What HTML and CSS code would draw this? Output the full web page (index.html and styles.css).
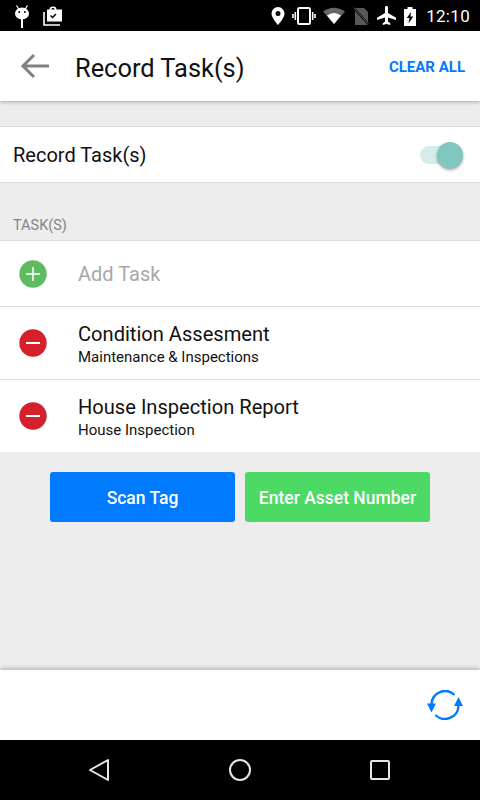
FILE: index.html
```html
<!DOCTYPE html>
<html lang="en">
<head>
<meta charset="utf-8">
<title>Record Task(s)</title>
<link rel="stylesheet" href="styles.css">
</head>
<body>
<div class="phone">
  <header class="status">
    <div class="status-left">
      <svg width="18" height="24" viewBox="0 0 18 24"><path d="M3.500 1.500l2.500 4M14.500 1.500l-2.500 4" stroke="#fff" stroke-width="1.200" fill="none"/><rect x="8" y="14" width="2" height="10" fill="#fff"/><ellipse cx="9" cy="9.500" rx="7" ry="6" fill="#fff"/><circle cx="6.200" cy="8" r="1" fill="#000"/><circle cx="11.800" cy="8" r="1" fill="#000"/></svg>
      <svg width="20" height="20" viewBox="0 0 20 20"><path d="M1 6v13h16" fill="none" stroke="#fff" stroke-width="1.600"/><path fill-rule="evenodd" d="M6.500 3.500a3.500 3 0 0 1 7 0h5.500v12H4v-12zM8.300 3.500h3.400a1.700 1.400 0 0 0-3.400 0z" fill="#fff"/><path d="M7.500 9.500l2 2 3.500-3.500" fill="none" stroke="#000" stroke-width="1.500"/></svg>
    </div>
    <div class="status-right">
      <svg width="14" height="20" viewBox="0 0 14 20"><path fill-rule="evenodd" d="M7 1a6.500 6.500 0 0 0-6.500 6.500C.5 12 7 19 7 19s6.500-7 6.500-11.500A6.500 6.500 0 0 0 7 1zm0 4a2.500 2.500 0 1 1 0 5 2.500 2.500 0 0 1 0-5z" fill="#fff"/></svg>
      <svg width="24" height="18" viewBox="0 0 24 18"><rect x="6" y="1" width="12" height="16" rx="1.500" fill="none" stroke="#fff" stroke-width="2"/><path d="M3.300 5v8M1 7v4M20.700 5v8M23 7v4" stroke="#fff" stroke-width="1.600"/></svg>
      <svg width="22" height="17" viewBox="0 0 22 17"><path d="M0 4.500Q11-3 22 4.500L11 17z" fill="#666"/><path d="M4 8.500Q11 3.500 18 8.500L11 17z" fill="#fff"/></svg>
      <svg width="18" height="20" viewBox="0 0 18 20"><path d="M3 2h9l4 4v13H3z" fill="#585858"/><path d="M0.500 0.500L17.500 19.500" stroke="#000" stroke-width="2"/><path d="M1.500 1.500L16.500 18" stroke="#585858" stroke-width="1"/></svg>
      <svg width="19" height="19" viewBox="0 0 19 19"><path d="M8 1.500c0-1.900 3-1.900 3 0V7l8 4.700v2.200l-8-2.500v4.200l2.300 1.700V19l-3.800-1.100L5.700 19v-1.700L8 15.600v-4.200l-8 2.500v-2.200L8 7z" fill="#fff"/></svg>
      <svg width="14" height="20" viewBox="0 0 14 20"><path fill-rule="evenodd" d="M4.500 1h5v2H13v17H1V3h3.500zM8 6L3.800 12H6.500l-1 5.500L10.300 10.500H7.500z" fill="#fff"/></svg>
      <span class="clock">12:10</span>
    </div>
  </header>

  <div class="appbar">
    <div class="appbar-left">
      <svg class="back" width="30" height="26" viewBox="0 0 30 26"><path d="M29 13H3M14 2L3 13l11 11" fill="none" stroke="#808080" stroke-width="3"/></svg>
      <h1 class="title">Record Task(s)</h1>
    </div>
    <span class="clear">CLEAR ALL</span>
  </div>

  <main class="content">
    <section class="toggle-row">
      <span class="toggle-label">Record Task(s)</span>
      <span class="switch"><span class="track"></span><span class="thumb"></span></span>
    </section>

    <div class="section-label">TASK(S)</div>

    <section class="list">
      <div class="item add">
        <svg class="badge" width="28" height="28" viewBox="0 0 28 28"><circle cx="14" cy="14" r="13.700" fill="#5fbb60"/><path d="M14 7v14M7 14h14" stroke="#fff" stroke-width="1.500"/></svg>
        <span class="add-text">Add Task</span>
      </div>
      <div class="item task">
        <svg class="badge" width="28" height="28" viewBox="0 0 28 28"><circle cx="14" cy="14" r="13.700" fill="#d3202a"/><path d="M7 14h14" stroke="#fff" stroke-width="2"/></svg>
        <div class="task-text"><div class="task-name">Condition Assesment</div><div class="task-sub">Maintenance &amp; Inspections</div></div>
      </div>
      <div class="item task">
        <svg class="badge" width="28" height="28" viewBox="0 0 28 28"><circle cx="14" cy="14" r="13.700" fill="#d3202a"/><path d="M7 14h14" stroke="#fff" stroke-width="2"/></svg>
        <div class="task-text"><div class="task-name">House Inspection Report</div><div class="task-sub">House Inspection</div></div>
      </div>
    </section>

    <div class="actions">
      <button class="btn btn-blue">Scan Tag</button>
      <button class="btn btn-green">Enter Asset Number</button>
    </div>
  </main>

  <div class="footer">
    <svg width="36" height="30" viewBox="0 0 36 30"><path d="M4.500 14A13.500 13.500 0 0 1 27.500 5M31.500 16A13.500 13.500 0 0 1 8.500 25" fill="none" stroke="#007aff" stroke-width="2.400"/><path d="M0 13.500h9L4.500 22.500zM27 16h9L31.500 7z" fill="#007aff"/></svg>
  </div>

  <nav class="navbar">
    <svg width="22" height="24" viewBox="0 0 22 24"><path d="M20 2v20L2 12z" fill="none" stroke="#e6e6e6" stroke-width="2" stroke-linejoin="round"/></svg>
    <svg width="22" height="22" viewBox="0 0 22 22"><circle cx="11" cy="11" r="10" fill="none" stroke="#e6e6e6" stroke-width="2"/></svg>
    <svg width="20" height="20" viewBox="0 0 20 20"><rect x="1" y="1" width="18" height="18" rx="1" fill="none" stroke="#e6e6e6" stroke-width="2"/></svg>
  </nav>
</div>
</body>
</html>
```

FILE: styles.css
```css
* { box-sizing: border-box; }
html, body { margin: 0; padding: 0; }
body { font-family: Roboto, sans-serif; background: #ededed; }
.phone { width: 480px; height: 800px; display: flex; flex-direction: column; overflow: hidden; background: #ededed; }

.status { height: 31px; flex: none; background: #000; display: flex; justify-content: space-between; align-items: center; padding: 0 10px 0 13px; }
.status-left { display: flex; align-items: center; gap: 12px; }
.status-right { display: flex; align-items: center; gap: 7px; }
.clock { color: #fff; font-size: 17px; letter-spacing: 0.3px; margin-left: 2px; }

.appbar { height: 70px; flex: none; background: #fff; display: flex; justify-content: space-between; align-items: center; padding: 0 15px 0 20px; box-shadow: 0 1px 4px rgba(0,0,0,.3); z-index: 1; }
.appbar-left { display: flex; align-items: center; gap: 25px; }
.title { margin: 0; padding-top: 3px; font-size: 25.400px; font-weight: 400; color: #111; }
.clear { color: #007aff; font-size: 15px; font-weight: 700; padding-top: 1px; }

.content { flex: 1; min-height: 0; padding-top: 25px; }
.toggle-row { height: 57px; background: #fff; border-top: 1px solid #dcdcdc; border-bottom: 1px solid #dcdcdc; display: flex; justify-content: space-between; align-items: center; padding: 0 16px 0 13px; }
.toggle-label { font-size: 20px; color: #111; }
.switch { position: relative; width: 44px; height: 26px; display: block; }
.track { position: absolute; left: 0; top: 4px; width: 34px; height: 18px; border-radius: 9px; background: #d4ecea; }
.thumb { position: absolute; right: 1px; top: 0; width: 26px; height: 26px; border-radius: 50%; background: #7fc7bf; box-shadow: 0 2px 3px rgba(0,0,0,.35); }

.section-label { height: 57px; padding: 0 13px 6px; display: flex; align-items: flex-end; font-size: 14.500px; color: #858585; }

.list { background: #fff; border-top: 1px solid #dcdcdc; }
.item { display: flex; align-items: center; padding-left: 18.500px; gap: 31.500px; border-bottom: 1px solid #dcdcdc; }
.item.add { height: 66px; }
.item.task { height: 73px; }
.item:last-child { border-bottom: 0; height: 72px; }
.add-text { font-size: 20px; color: #a8a8a8; }
.task-text { display: flex; flex-direction: column; padding-top: 2px; }
.task-name { font-size: 20.100px; line-height: 26px; color: #111; }
.task-sub { font-size: 15px; line-height: 20px; color: #111; }

.actions { display: flex; justify-content: center; gap: 10px; padding-top: 20px; }
.btn { width: 185px; height: 50px; border: 0; border-radius: 3px; color: #fff; font: 500 17.500px Roboto, sans-serif; padding: 2px 0 0; }
.btn-blue { background: #007aff; }
.btn-green { background: #4cd964; }

.footer { height: 70px; flex: none; background: #fff; display: flex; align-items: center; justify-content: flex-end; padding-right: 17px; box-shadow: 0 -1px 5px rgba(0,0,0,.3); }
.navbar { height: 60px; flex: none; background: #000; display: flex; align-items: center; padding: 0 90px 0 88px; justify-content: space-between; }
```
